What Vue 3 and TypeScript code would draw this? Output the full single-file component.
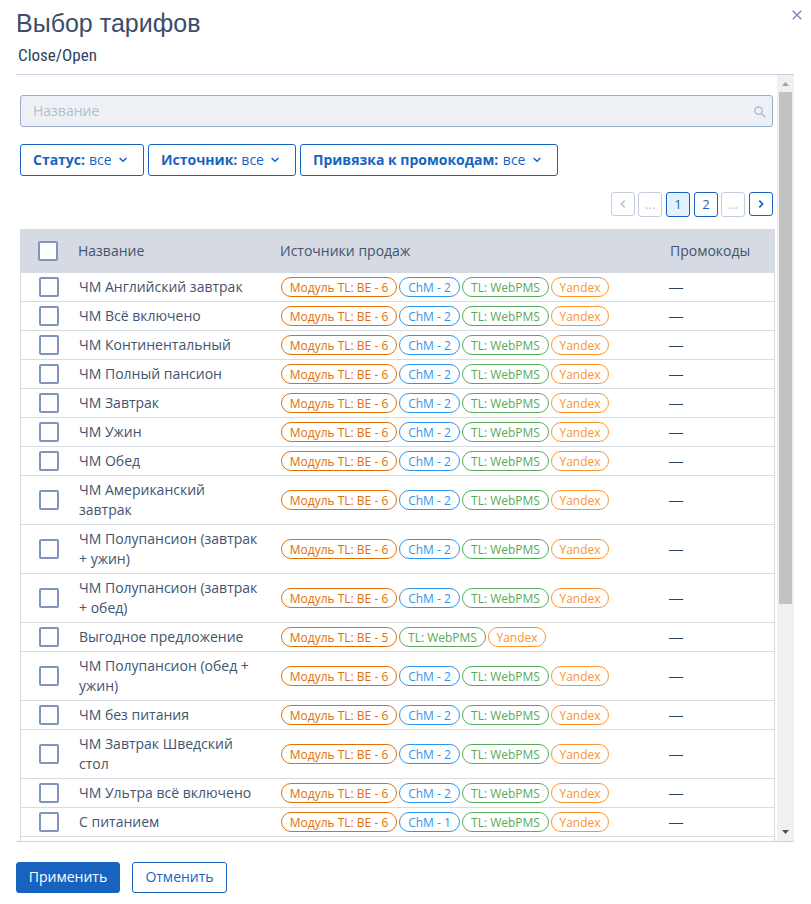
<script setup lang="ts">
type Kind = 'be' | 'chm' | 'pms' | 'yandex'

interface Source {
  kind: Kind
  label: string
}

interface Tariff {
  name: string
  sources: Source[]
}

function tariff(name: string, be = 6, chm = 2): Tariff {
  const sources: Source[] = [{ kind: 'be', label: `Модуль TL: BE - ${be}` }]
  if (chm > 0) sources.push({ kind: 'chm', label: `ChM - ${chm}` })
  sources.push({ kind: 'pms', label: 'TL: WebPMS' }, { kind: 'yandex', label: 'Yandex' })
  return { name, sources }
}

const filters = [
  { id: 'status', label: 'Статус:', value: 'все' },
  { id: 'source', label: 'Источник:', value: 'все' },
  { id: 'promo', label: 'Привязка к промокодам:', value: 'все' },
]

const tariffs: Tariff[] = [
  tariff('ЧМ Английский завтрак'),
  tariff('ЧМ Всё включено'),
  tariff('ЧМ Континентальный'),
  tariff('ЧМ Полный пансион'),
  tariff('ЧМ Завтрак'),
  tariff('ЧМ Ужин'),
  tariff('ЧМ Обед'),
  tariff('ЧМ Американский завтрак'),
  tariff('ЧМ Полупансион (завтрак + ужин)'),
  tariff('ЧМ Полупансион (завтрак + обед)'),
  tariff('Выгодное предложение', 5, 0),
  tariff('ЧМ Полупансион (обед + ужин)'),
  tariff('ЧМ без питания'),
  tariff('ЧМ Завтрак Шведский стол'),
  tariff('ЧМ Ультра всё включено'),
  tariff('С питанием', 6, 1),
]
</script>

<template>
  <div class="dialog">
    <header class="header">
      <div>
        <h1 class="title">Выбор тарифов</h1>
        <div class="subtitle">Close/Open</div>
      </div>
      <button class="close" aria-label="Закрыть">
        <svg width="10" height="10" viewBox="0 0 10 10"><path d="M.7.7l8.6 8.6M9.3.7L.7 9.3" /></svg>
      </button>
    </header>

    <div class="body">
      <main class="content">
        <div class="search">
          <span>Название</span>
          <svg width="12" height="12" viewBox="0 0 12 12"><circle cx="4.6" cy="4.6" r="3.7" /><path d="M7.4 7.4l4 4" /></svg>
        </div>

        <div class="filters">
          <button v-for="f in filters" :key="f.id" class="filter" :class="f.id">
            <b>{{ f.label }}</b><span>{{ f.value }}</span>
            <svg width="8" height="6" viewBox="0 0 8 6"><path d="M.6 1L4 4.3 7.4 1" /></svg>
          </button>
        </div>

        <nav class="pager">
          <span class="page off prev"><svg width="6" height="8" viewBox="0 0 6 8"><path d="M4.7.6L1.4 4l3.3 3.4" /></svg></span>
          <span class="page off dots">...</span>
          <span class="page current">1</span>
          <span class="page second">2</span>
          <span class="page off dots">...</span>
          <span class="page next"><svg width="6" height="8" viewBox="0 0 6 8"><path d="M1.3.6L4.6 4 1.3 7.4" /></svg></span>
        </nav>

        <div class="table">
          <div class="row head">
            <span class="check"></span>
            <span>Название</span>
            <span>Источники продаж</span>
            <span>Промокоды</span>
          </div>
          <div v-for="t in tariffs" :key="t.name" class="row">
            <span class="check"></span>
            <span class="name">{{ t.name }}</span>
            <span class="tags">
              <span v-for="s in t.sources" :key="s.kind" class="tag" :class="s.kind">{{ s.label }}</span>
            </span>
            <span class="none">—</span>
          </div>
          <div class="rest"></div>
        </div>
      </main>

      <div class="scrollbar">
        <svg class="arrow up" width="7" height="4" viewBox="0 0 7 4"><path d="M0 4L3.5 0 7 4z" /></svg>
        <div class="thumb"></div>
        <svg class="arrow down" width="7" height="4" viewBox="0 0 7 4"><path d="M0 0h7L3.5 4z" /></svg>
      </div>
    </div>

    <footer class="footer">
      <button class="btn primary">Применить</button>
      <button class="btn">Отменить</button>
    </footer>
  </div>
</template>

<style>
body {
  margin: 0;
  background: #fff;
}
</style>

<style scoped>
* {
  box-sizing: border-box;
}
.dialog {
  width: 811px;
  height: 904px;
  padding: 0 17px 0 16px;
  overflow: hidden;
  display: flex;
  flex-direction: column;
  font: 14px/20px "Open Sans", "Noto Sans", sans-serif;
  color: #42546e;
}
button {
  margin: 0;
  font: inherit;
  background: #fff;
}
svg {
  display: block;
  fill: none;
  stroke: currentColor;
  flex: none;
}
.header {
  height: 74px;
  flex: none;
  display: flex;
  justify-content: space-between;
  margin-right: -8px;
}
.title {
  margin: 8px 0 0;
  font: 400 25px/30px "Liberation Sans", Arial, sans-serif;
  color: #3b4d69;
}
.subtitle {
  margin: 7px 0 0 2px;
  font: 17px/20px Roboto, sans-serif;
  font-stretch: 75%;
  color: #2f4260;
}
.close {
  align-self: flex-start;
  margin-top: 10px;
  padding: 0;
  border: 0;
  color: #7c93b8;
}
.close svg {
  stroke-width: 1.6;
}
.body {
  height: 768px;
  flex: none;
  display: flex;
  justify-content: space-between;
  border-top: 1px solid #c9d3e2;
  border-bottom: 1px solid #c9d3e2;
  overflow: hidden;
}
.content {
  width: 759px;
  padding: 20px 0 0 4px;
}
.search {
  width: 753px;
  height: 32px;
  padding: 0 6px 0 12px;
  display: flex;
  align-items: center;
  justify-content: space-between;
  border: 1px solid #9aaccb;
  border-radius: 3px;
  background: #edf1f5;
  color: #b3bed0;
}
.search svg {
  margin-top: 2px;
  stroke-width: 1.5;
}
.filters {
  margin-top: 17px;
  display: flex;
  gap: 4px;
}
.filter {
  height: 32px;
  padding: 0 12px;
  display: flex;
  align-items: center;
  gap: 4px;
  border: 1px solid #1863bf;
  border-radius: 3px;
  color: #1863bf;
  white-space: nowrap;
}
.filter svg {
  margin-left: 3px;
  stroke-width: 1.5;
}
.status {
  width: 124px;
}
.source {
  width: 148px;
}
.promo {
  width: 258px;
  gap: 4.5px;
}
.pager {
  width: 753px;
  margin-top: 16px;
  display: flex;
  justify-content: flex-end;
}
.page {
  width: 24px;
  height: 24px;
  display: flex;
  align-items: center;
  justify-content: center;
  border: 1px solid #1863bf;
  border-radius: 3px;
  color: #1863bf;
  font-size: 13px;
  margin-left: 3px;
}
.page svg {
  stroke-width: 1.7;
}
.off {
  border-color: #c3cddd;
  color: #b8c4d8;
}
.current {
  margin-left: 4px;
  background: #e3f1fd;
}
.second,
.next {
  margin-left: 4px;
}
.second,
.current,
.dots {
  height: 25px;
  padding-bottom: 2px;
}
.table {
  width: 755px;
  margin-top: 12px;
}
.row {
  display: grid;
  grid-template-columns: 58px 201px 390px 1fr;
  align-items: center;
  padding: 4px 0;
  border: 1px solid #d5dae3;
  border-top: 0;
}
.head {
  height: 44px;
  padding: 0;
  grid-template-columns: 57px 202px 390px 1fr;
  background: #d5dae3;
}
.check {
  width: 20px;
  height: 20px;
  margin-left: 18px;
  border: 2px solid #7f96ba;
  border-radius: 2px;
  background: #fff;
}
.head .check {
  margin-left: 17px;
}
.name {
  padding-right: 20px;
}
.none {
  margin-left: -1px;
  font-family: "Liberation Sans", Arial, sans-serif;
  color: #2f4260;
}
.tags {
  display: flex;
  gap: 2px;
  margin-left: 1px;
}
.tag {
  height: 20px;
  border: 1px solid;
  border-radius: 10px;
  font-size: 12px;
  line-height: 19px;
  text-align: center;
  white-space: nowrap;
}
.be {
  width: 116px;
  color: #de7008;
}
.chm {
  width: 61px;
  color: #2f96ed;
}
.pms {
  width: 87px;
  color: #55ab59;
}
.yandex {
  width: 58px;
  color: #fb9530;
}
.rest {
  height: 12px;
  border: solid #d5dae3;
  border-width: 0 1px;
}
.scrollbar {
  width: 17px;
  display: flex;
  flex-direction: column;
  align-items: center;
  background: #f0f0f0;
}
.thumb {
  width: 13px;
  height: 512px;
  background: #c1c1c1;
}
.arrow {
  stroke: none;
}
.up {
  margin: 7px 0 6px;
  fill: #a0a0a0;
}
.down {
  margin: auto 0 7px;
  fill: #505050;
}
.footer {
  display: flex;
  gap: 12px;
  padding-top: 20px;
}
.btn {
  width: 95px;
  height: 31px;
  padding: 0 0 2px;
  border: 1px solid #1863bf;
  border-radius: 3px;
  color: #1863bf;
}
.primary {
  width: 104px;
  background: #1863bf;
  color: #fff;
  font-weight: 500;
}
</style>
